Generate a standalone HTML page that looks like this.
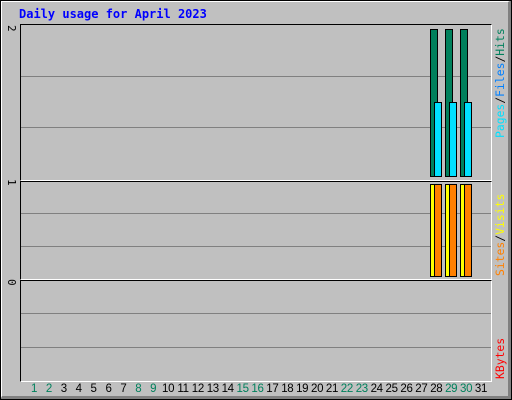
<!DOCTYPE html>
<html><head><style>
*{margin:0;padding:0;box-sizing:border-box}
body{width:512px;height:400px;background:#c0c0c0;position:relative;overflow:hidden;font-family:"DejaVu Sans Mono","Liberation Mono",monospace}
.a{position:absolute}
.p{position:absolute;left:20px;width:472px;border-left:1px solid #000;border-top:1px solid #000;border-right:1px solid #fff;border-bottom:1px solid #fff;background:#c0c0c0}
.g{position:absolute;left:21px;width:470px;height:1px;background:#808080}
.b{position:absolute;border:1px solid #000}
.d{position:absolute;top:383px;font-size:11.5px;width:20px;text-align:center;font-family:"Liberation Sans",sans-serif;letter-spacing:-0.3px}
.r{position:absolute;transform-origin:0 0;transform:rotate(-90deg);font-size:11.4px;line-height:13px;white-space:nowrap;font-family:"DejaVu Sans Mono",monospace}
.l{position:absolute;transform-origin:0 0;transform:rotate(90deg);font-size:11px;font-family:"DejaVu Sans Mono",monospace}
</style></head><body>
<div class="a" style="left:0;top:0;width:512px;height:400px;border-left:2px solid #fff;border-top:2px solid #fff;border-right:4px solid #808080;border-bottom:4px solid #808080;outline:1px solid #000;outline-offset:-1px"></div>
<div class="a" style="left:19px;top:7px;color:#0000ff;font-weight:bold;font-size:12px">Daily usage for April 2023</div>
<div class="p" style="top:24px;height:157px"></div>
<div class="p" style="top:181px;height:99px"></div>
<div class="p" style="top:280px;height:102px"></div>
<div class="g" style="top:76px"></div><div class="g" style="top:127px"></div>
<div class="g" style="top:213px"></div><div class="g" style="top:246px"></div>
<div class="g" style="top:313px"></div><div class="g" style="top:347px"></div>
<div class="l" style="left:18px;top:25px">2</div>
<div class="l" style="left:18px;top:179px">1</div>
<div class="l" style="left:18px;top:279px">0</div>
<div class="b" style="left:430px;top:29px;width:8px;height:148px;background:#00805c"></div>
<div class="b" style="left:445px;top:29px;width:8px;height:148px;background:#00805c"></div>
<div class="b" style="left:460px;top:29px;width:8px;height:148px;background:#00805c"></div>
<div class="b" style="left:434px;top:102px;width:8px;height:75px;background:#00e0ff"></div>
<div class="b" style="left:449px;top:102px;width:8px;height:75px;background:#00e0ff"></div>
<div class="b" style="left:464px;top:102px;width:8px;height:75px;background:#00e0ff"></div>
<div class="b" style="left:430px;top:184px;width:6px;height:93px;background:#ffff00"></div>
<div class="b" style="left:445px;top:184px;width:6px;height:93px;background:#ffff00"></div>
<div class="b" style="left:460px;top:184px;width:6px;height:93px;background:#ffff00"></div>
<div class="b" style="left:434px;top:184px;width:8px;height:93px;background:#ff8000"></div>
<div class="b" style="left:449px;top:184px;width:8px;height:93px;background:#ff8000"></div>
<div class="b" style="left:464px;top:184px;width:8px;height:93px;background:#ff8000"></div>
<div class="r" style="left:494px;top:138px"><span style="color:#00e0ff">Pages</span><span style="color:#000">/</span><span style="color:#0080ff">Files</span><span style="color:#000">/</span><span style="color:#00805c">Hits</span></div>
<div class="r" style="left:494px;top:276px"><span style="color:#ff8000">Sites</span><span style="color:#000">/</span><span style="color:#ffff00">Visits</span></div>
<div class="r" style="left:494px;top:379px;color:#ff0000">KBytes</div>
<div id="days"></div>
<script>
var h='';for(var i=1;i<=31;i++){var x=34+(i-1)*14.9-10;var dw=new Date(2023,3,i).getDay();var c=(dw==0||dw==6)?'#00805c':'#000';h+='<div class="d" style="left:'+x+'px;color:'+c+'">'+i+'</div>';}
document.getElementById('days').innerHTML=h;
</script>
</body></html>
